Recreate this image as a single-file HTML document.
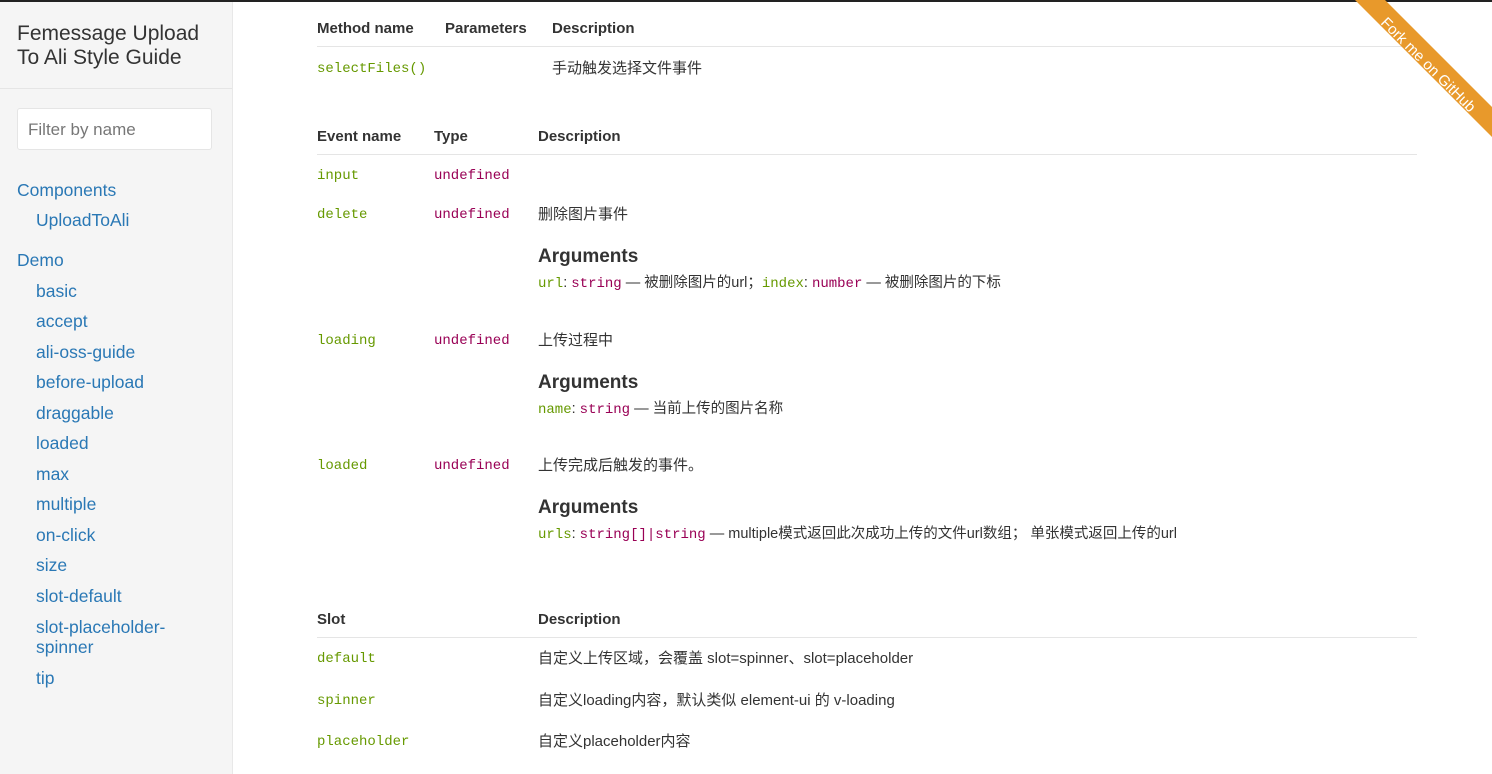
<!DOCTYPE html>
<html><head><meta charset="utf-8"><style>
*{margin:0;padding:0;box-sizing:border-box}
body{width:1492px;height:774px;overflow:hidden;background:#fff;font-family:"Liberation Sans","Noto Sans CJK SC",sans-serif;color:#333;position:relative}
.top{position:absolute;left:0;top:0;width:1492px;height:2px;background:#222}
.side{position:absolute;left:0;top:2px;width:233px;height:772px;background:#f5f5f5;border-right:1px solid #e8e8e8}
.title{position:absolute;left:17px;top:20px;font-size:21px;line-height:24px;color:#333}
.hr{position:absolute;left:0;top:88px;width:232px;height:1px;background:#e5e5e5}
.inp{position:absolute;left:17px;top:108px;width:195px;height:42px;background:#fff;border:1px solid #e5e5e5;border-radius:3px;font-size:17px;color:#777;padding:11px 10px}
.nav{position:absolute;font-size:17.5px;color:#2a78b5;white-space:nowrap;line-height:20px}
.a{position:absolute;white-space:nowrap;font-size:15px;line-height:20px;margin-top:2px}
.h{font-weight:bold;color:#333}
.m{font-family:"Liberation Mono",monospace;font-size:14px;color:#690}
.p{font-family:"Liberation Mono",monospace;font-size:14px;color:#905}
.ln{position:absolute;left:317px;width:1100px;height:1px;background:#e5e5e5}
.arg{position:absolute;font-size:19px;font-weight:bold;color:#333;line-height:22px;margin-top:2px}
</style></head><body>
<div class="top"></div>
<div class="side">
<div class="title">Femessage Upload<br>To Ali Style Guide</div>
</div>
<div class="hr"></div>
<div class="inp">Filter by name</div>
<div class="nav" style="left:17px;top:180px">Components</div>
<div class="nav" style="left:36px;top:210px">UploadToAli</div>
<div class="nav" style="left:17px;top:250px">Demo</div>
<div class="nav" style="left:36px;top:281px">basic</div>
<div class="nav" style="left:36px;top:311px">accept</div>
<div class="nav" style="left:36px;top:342px">ali-oss-guide</div>
<div class="nav" style="left:36px;top:372px">before-upload</div>
<div class="nav" style="left:36px;top:403px">draggable</div>
<div class="nav" style="left:36px;top:433px">loaded</div>
<div class="nav" style="left:36px;top:464px">max</div>
<div class="nav" style="left:36px;top:494px">multiple</div>
<div class="nav" style="left:36px;top:525px">on-click</div>
<div class="nav" style="left:36px;top:555px">size</div>
<div class="nav" style="left:36px;top:586px">slot-default</div>
<div class="nav" style="left:36px;top:617px">slot-placeholder-<br>spinner</div>
<div class="nav" style="left:36px;top:668px">tip</div>

<div class="a h" style="left:317px;top:17px">Method name</div>
<div class="a h" style="left:445px;top:17px">Parameters</div>
<div class="a h" style="left:552px;top:17px">Description</div>
<div class="ln" style="top:46px"></div>
<div class="a m" style="left:317px;top:57px">selectFiles()</div>
<div class="a" style="left:552px;top:57px">手动触发选择文件事件</div>

<div class="a h" style="left:317px;top:125px">Event name</div>
<div class="a h" style="left:434px;top:125px">Type</div>
<div class="a h" style="left:538px;top:125px">Description</div>
<div class="ln" style="top:154px"></div>
<div class="a m" style="left:317px;top:164px">input</div><div class="a p" style="left:434px;top:164px">undefined</div>
<div class="a m" style="left:317px;top:203px">delete</div><div class="a p" style="left:434px;top:203px">undefined</div>
<div class="a" style="left:538px;top:203px">删除图片事件</div>
<div class="arg" style="left:538px;top:244px">Arguments</div>
<div class="a" style="left:538px;top:271px;font-size:14.5px"><span class="m">url</span>: <span class="p">string</span> — 被删除图片的url；<span class="m">index</span>: <span class="p">number</span> — 被删除图片的下标</div>
<div class="a m" style="left:317px;top:329px">loading</div><div class="a p" style="left:434px;top:329px">undefined</div>
<div class="a" style="left:538px;top:329px">上传过程中</div>
<div class="arg" style="left:538px;top:370px">Arguments</div>
<div class="a" style="left:538px;top:397px;font-size:14.5px"><span class="m">name</span>: <span class="p">string</span> — 当前上传的图片名称</div>
<div class="a m" style="left:317px;top:454px">loaded</div><div class="a p" style="left:434px;top:454px">undefined</div>
<div class="a" style="left:538px;top:454px">上传完成后触发的事件。</div>
<div class="arg" style="left:538px;top:495px">Arguments</div>
<div class="a" style="left:538px;top:522px;font-size:14.5px"><span class="m">urls</span>: <span class="p">string[]|string</span> — multiple模式返回此次成功上传的文件url数组； 单张模式返回上传的url</div>

<div class="a h" style="left:317px;top:608px">Slot</div>
<div class="a h" style="left:538px;top:608px">Description</div>
<div class="ln" style="top:637px"></div>
<div class="a m" style="left:317px;top:647px">default</div>
<div class="a" style="left:538px;top:647px">自定义上传区域，会覆盖 slot=spinner、slot=placeholder</div>
<div class="a m" style="left:317px;top:689px">spinner</div>
<div class="a" style="left:538px;top:689px">自定义loading内容，默认类似 element-ui 的 v-loading</div>
<div class="a m" style="left:317px;top:730px">placeholder</div>
<div class="a" style="left:538px;top:730px">自定义placeholder内容</div>

<svg style="position:absolute;left:0;top:0" width="1492" height="774">
<polygon points="1355,0 1385,0 1492,107 1492,137" fill="#e8992b"/>
<text x="0" y="0" transform="translate(1428,65) rotate(45)" text-anchor="middle" dominant-baseline="central" fill="#fff" font-family="Liberation Sans" font-size="15">Fork me on GitHub</text>
</svg>
</body></html>
